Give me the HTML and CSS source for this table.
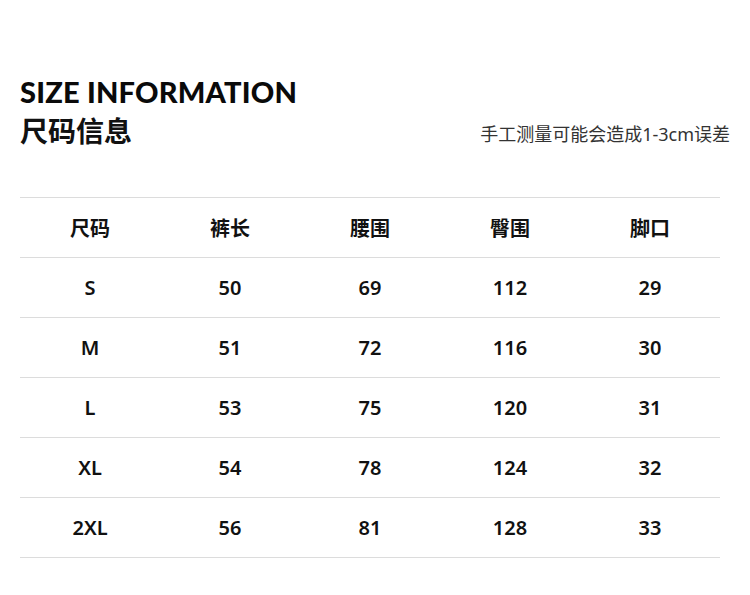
FILE: index.html
```html
<!DOCTYPE html>
<html lang="zh">
<head>
<meta charset="utf-8">
<link rel="stylesheet" href="styles.css">
</head>
<body>
<div class="page">
  <header class="head">
    <div class="titles">
      <div class="en">SIZE INFORMATION</div>
      <div class="cn">尺码信息</div>
    </div>
    <div class="note">手工测量可能会造成1-3cm误差</div>
  </header>
  <div class="table">
    <div class="row hdr"><span>尺码</span><span>裤长</span><span>腰围</span><span>臀围</span><span>脚口</span></div>
    <div class="row"><span>S</span><span>50</span><span>69</span><span>112</span><span>29</span></div>
    <div class="row"><span>M</span><span>51</span><span>72</span><span>116</span><span>30</span></div>
    <div class="row"><span>L</span><span>53</span><span>75</span><span>120</span><span>31</span></div>
    <div class="row"><span>XL</span><span>54</span><span>78</span><span>124</span><span>32</span></div>
    <div class="row"><span>2XL</span><span>56</span><span>81</span><span>128</span><span>33</span></div>
  </div>
</div>
</body>
</html>
```
FILE: styles.css
```css
html, body { margin: 0; padding: 0; background: #fff; }
body { font-family: "Noto Sans", "Noto Sans CJK SC", sans-serif; color: #111; }
.page { width: 750px; height: 595px; padding: 0 20px; box-sizing: border-box; }
.head { display: flex; justify-content: space-between; align-items: flex-end; padding-top: 96px; height: 150px; box-sizing: border-box; }
.titles { display: flex; flex-direction: column; }
.en { font-family: "Lato", sans-serif; font-weight: 900; font-size: 29px; line-height: 34px; letter-spacing: 0.2px; color: #0a0a0a; }
.cn { font-family: "Noto Sans CJK SC", sans-serif; font-weight: 700; font-size: 28px; line-height: 40px; color: #111; margin-top: 1px; }
.note { font-family: "Noto Sans", "Noto Sans CJK SC", sans-serif; font-size: 18px; line-height: 24px; color: #333; margin-right: 0; margin-bottom: 4px; }
.table { margin-top: 47px; width: 700px; border-top: 1px solid #dcdcdc; }
.row { display: grid; grid-template-columns: repeat(5, 1fr); height: 60px; border-bottom: 1px solid #dcdcdc; box-sizing: border-box; align-items: center; }
.row span { text-align: center; font-size: 20px; font-weight: 600; font-family: "Noto Sans", "Noto Sans CJK SC", sans-serif; color: #111; }
.row.hdr span { font-family: "Noto Sans CJK SC", sans-serif; font-weight: 700; font-size: 20px; }
```
